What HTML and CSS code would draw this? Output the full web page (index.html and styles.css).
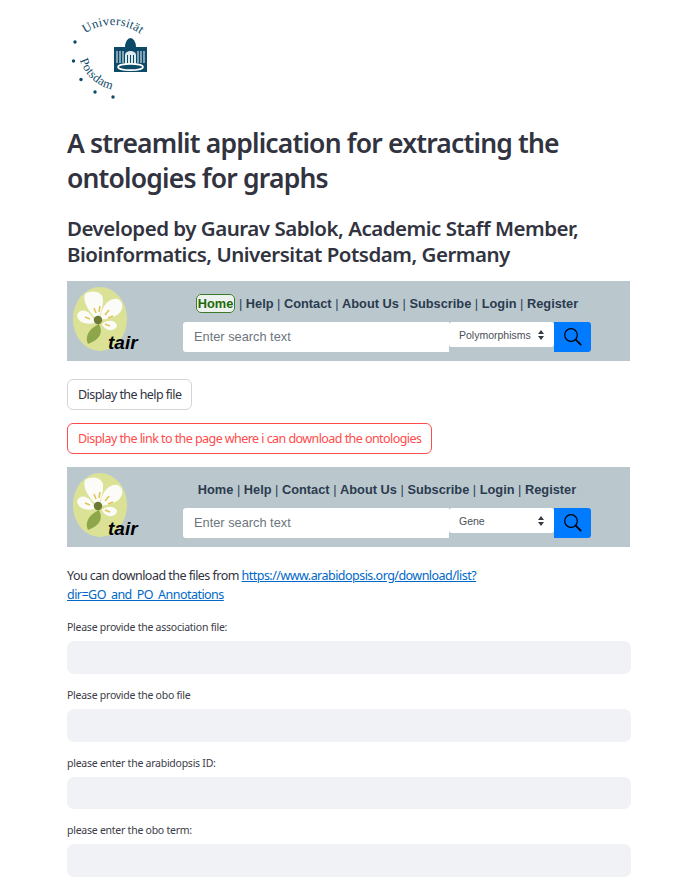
FILE: index.html
```html
<!DOCTYPE html>
<html lang="en">
<head>
<meta charset="utf-8">
<title>Ontologies for graphs</title>
<link rel="stylesheet" href="styles.css">
</head>
<body>
<main class="page">
  <svg class="logo" width="90" height="92" viewBox="0 0 90 92">
    <defs>
      <path id="arcTop" d="M5 33 A48 48 0 0 1 80 33"/>
      <path id="arcBottom" d="M10 50 A42 42 0 0 0 47 80"/>
    </defs>
    <text class="logo-text"><textPath href="#arcTop" startOffset="14">Universität</textPath></text>
    <text class="logo-text"><textPath href="#arcBottom">Potsdam</textPath></text>
    <circle class="logo-ink" cx="5" cy="32" r="1.7"/>
    <circle class="logo-ink" cx="3.5" cy="51" r="1.7"/>
    <circle class="logo-ink" cx="11" cy="69.5" r="1.7"/>
    <circle class="logo-ink" cx="25" cy="82" r="1.7"/>
    <circle class="logo-ink" cx="43" cy="87" r="1.7"/>
    <path class="logo-ink" d="M55 37 a5.5 9 0 0 1 11 0 z"/>
    <rect class="logo-ink" x="44" y="37" width="33" height="25"/>
    <path class="logo-light" d="M47 41v12M50 41v12M53 41v12M68 41v12M71 41v12M74 41v12"/>
    <path class="logo-arch" d="M55 45 a5.5 4 0 0 1 11 0 v9 h-11 z"/>
    <path class="logo-pillars" d="M57.5 45v9M60.5 45v9M63.5 45v9"/>
    <ellipse class="logo-ring" cx="60.5" cy="57" rx="12.5" ry="3.2"/>
  </svg>

  <h1 class="title">A streamlit application for extracting the ontologies for graphs</h1>
  <h2 class="subtitle">Developed by Gaurav Sablok, Academic Staff Member, Bioinformatics, Universitat Potsdam, Germany</h2>

  <section class="tair">
    <svg class="tair-logo" width="70" height="74" viewBox="0 0 70 74">
      <ellipse cx="27" cy="33" rx="27" ry="32" fill="#dbe296"/>
      <path d="M26 38 C30 46 28 53 15 58 C11 50 17 42 26 38z" fill="#8ea64a"/>
      <path d="M25 34 C16 27 9 15 12 8 C20 3 31 6 30 15 C30 22 27 28 25 34z" fill="#fbfcf8"/>
      <path d="M27 33 C28 22 35 11 45 13 C53 18 49 28 40 31 C34 33 30 34 27 33z" fill="#fbfcf8"/>
      <path d="M29 38 C34 33 42 34 44 39 C43 46 32 46 29 38z" fill="#fbfcf8"/>
      <path d="M22 37 C14 39 5 37 4 29 C8 20 19 25 22 37z" fill="#fbfcf8"/>
      <circle cx="25" cy="34" r="4.2" fill="#6f7a35"/>
      <path class="tair-stamen" d="M21 22l2 5M27 20l-1 6M36 24l-4 5M40 30l-5 2M37 40l-5-2M12 31l5 2"/>
    </svg>
    <em class="tair-word">tair</em>
    <div class="tair-center">
      <nav class="tair-nav"><a class="tair-link tair-active">Home</a> | <a class="tair-link">Help</a> | <a class="tair-link">Contact</a> | <a class="tair-link">About Us</a> | <a class="tair-link">Subscribe</a> | <a class="tair-link">Login</a> | <a class="tair-link">Register</a></nav>
      <div class="tair-search">
        <div class="tair-input">Enter search text</div>
        <div class="tair-select"><span>Polymorphisms</span>
          <svg width="8" height="10" viewBox="0 0 8 10"><path d="M4 0l3 4H1zM4 10L1 6h6z" fill="#343a40"/></svg>
        </div>
        <div class="tair-go">
          <svg width="20" height="20" viewBox="0 0 20 20"><circle cx="8" cy="8" r="6.3" fill="none" stroke="#000" stroke-width="1.2"/><path d="M12.7 12.7l5.5 5.5" stroke="#000" stroke-width="1.8"/></svg>
        </div>
      </div>
    </div>
  </section>

  <button class="btn btn-first">Display the help file</button>
  <button class="btn btn-red">Display the link to the page where i can download the ontologies</button>

  <section class="tair tair-second">
    <svg class="tair-logo" width="70" height="74" viewBox="0 0 70 74">
      <ellipse cx="27" cy="33" rx="27" ry="32" fill="#dbe296"/>
      <path d="M26 38 C30 46 28 53 15 58 C11 50 17 42 26 38z" fill="#8ea64a"/>
      <path d="M25 34 C16 27 9 15 12 8 C20 3 31 6 30 15 C30 22 27 28 25 34z" fill="#fbfcf8"/>
      <path d="M27 33 C28 22 35 11 45 13 C53 18 49 28 40 31 C34 33 30 34 27 33z" fill="#fbfcf8"/>
      <path d="M29 38 C34 33 42 34 44 39 C43 46 32 46 29 38z" fill="#fbfcf8"/>
      <path d="M22 37 C14 39 5 37 4 29 C8 20 19 25 22 37z" fill="#fbfcf8"/>
      <circle cx="25" cy="34" r="4.2" fill="#6f7a35"/>
      <path class="tair-stamen" d="M21 22l2 5M27 20l-1 6M36 24l-4 5M40 30l-5 2M37 40l-5-2M12 31l5 2"/>
    </svg>
    <em class="tair-word">tair</em>
    <div class="tair-center">
      <nav class="tair-nav"><a class="tair-link">Home</a> | <a class="tair-link">Help</a> | <a class="tair-link">Contact</a> | <a class="tair-link">About Us</a> | <a class="tair-link">Subscribe</a> | <a class="tair-link">Login</a> | <a class="tair-link">Register</a></nav>
      <div class="tair-search">
        <div class="tair-input">Enter search text</div>
        <div class="tair-select"><span>Gene</span>
          <svg width="8" height="10" viewBox="0 0 8 10"><path d="M4 0l3 4H1zM4 10L1 6h6z" fill="#343a40"/></svg>
        </div>
        <div class="tair-go">
          <svg width="20" height="20" viewBox="0 0 20 20"><circle cx="8" cy="8" r="6.3" fill="none" stroke="#000" stroke-width="1.2"/><path d="M12.7 12.7l5.5 5.5" stroke="#000" stroke-width="1.8"/></svg>
        </div>
      </div>
    </div>
  </section>

  <p class="note">You can download the files from <a class="note-link">https://www.arabidopsis.org/download/list?<br>dir=GO_and_PO_Annotations</a></p>

  <div class="field field-first"><label class="field-label">Please provide the association file:</label><div class="field-input"></div></div>
  <div class="field"><label class="field-label">Please provide the obo file</label><div class="field-input"></div></div>
  <div class="field"><label class="field-label">please enter the arabidopsis ID:</label><div class="field-input"></div></div>
  <div class="field"><label class="field-label">please enter the obo term:</label><div class="field-input"></div></div>
</main>
</body>
</html>
```

FILE: styles.css
```css
html, body { margin: 0; padding: 0; background: #fff; }
body { height: 877px; overflow: hidden; font-family: "Noto Sans", "Open Sans", sans-serif; color: #31333f; }
.page { width: 564px; margin-left: 67px; padding-top: 10px; display: flow-root; }

.logo { display: block; margin-left: 3px; }
.logo-text { font-family: "Liberation Serif", serif; font-size: 12.5px; fill: #0d4a68; letter-spacing: .3px; }
.logo-ink { fill: #0d4a68; }
.logo-light { stroke: #cfe0e8; stroke-width: 1.2; fill: none; }
.logo-arch { fill: #dfeaef; }
.logo-pillars { stroke: #0d4a68; stroke-width: 1; fill: none; }
.logo-ring { fill: #0d4a68; stroke: #fff; stroke-width: 1.8; }

.title { margin: 24px 0 0; font-size: 26.5px; line-height: 35px; font-weight: 600; letter-spacing: -.82px; width: 540px; }
.subtitle { margin: 19px 0 0; font-size: 20.5px; line-height: 26px; font-weight: 600; letter-spacing: -.49px; }

.tair { height: 80px; margin-top: 14px; background: #bac8ce; position: relative; display: flex; width: 563px; }
.tair-second { margin-top: 13px; }
.tair-logo { position: absolute; left: 6px; top: 5px; }
.tair-stamen { stroke: #e4c45a; stroke-width: 1.6; fill: none; }
.tair-word { position: absolute; left: 41px; top: 50px; font-family: "Liberation Sans", sans-serif; font-size: 19px; line-height: 24px; font-weight: 700; color: #000; }
.tair-center { margin-left: 116px; width: 408px; }
.tair-nav { height: 41px; padding-top: 13px; box-sizing: border-box; text-align: center; font-family: "Liberation Sans", sans-serif; font-size: 12.8px; line-height: 20px; color: #2f4358; white-space: nowrap; }
.tair-link { font-weight: 700; color: #2b3b4e; }
.tair-active { color: #1d6a0b; border: 1px solid #3c7a2a; border-radius: 5px; padding: 1px; background: #eef2ef; }
.tair-search { display: flex; align-items: flex-start; font-family: "Liberation Sans", sans-serif; }
.tair-input { width: 266px; height: 30px; box-sizing: border-box; background: #fff; border-radius: 3px 0 0 3px; padding-left: 11px; font-size: 12.8px; line-height: 29px; color: #6c757d; }
.tair-select { width: 105px; height: 25px; box-sizing: border-box; background: #fff; border-radius: 3px; padding: 0 9px 0 10px; display: flex; align-items: center; justify-content: space-between; font-size: 10.5px; color: #495057; }
.tair-go { width: 37px; height: 30px; background: #007bff; border-radius: 0 3px 3px 0; display: flex; align-items: center; justify-content: center; }

.btn { display: block; height: 31px; box-sizing: border-box; padding: 1px 10px 0; background: #fff; border: 1px solid #d3d4d8; border-radius: 6px; font: 400 12.5px/28px "Noto Sans", sans-serif; letter-spacing: -.56px; color: #31333f; }
.btn-first { margin-top: 18px; }
.btn-red { margin-top: 13px; border-color: #ff4b4b; color: #ff4b4b; }

.note { margin: 19px 0 0; font-size: 12.5px; line-height: 19px; letter-spacing: -.53px; color: #31333f; }
.note-link { color: #0068c9; text-decoration: underline; }

.field { margin-top: 13px; }
.field-first { margin-top: 15px; }
.field-label { display: block; height: 22px; font-size: 10.5px; line-height: 16px; letter-spacing: -.25px; color: #3a3c47; }
.field-input { height: 32.75px; border-radius: 7px; background: #f0f2f6; }
```
